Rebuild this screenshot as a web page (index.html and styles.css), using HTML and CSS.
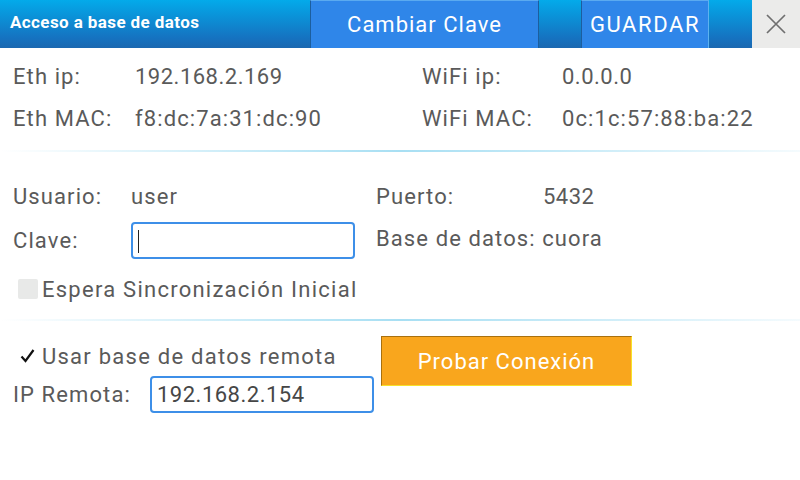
FILE: index.html
```html
<!DOCTYPE html>
<html lang="es">
<head>
<meta charset="utf-8">
<title>Acceso a base de datos</title>
<link rel="stylesheet" href="styles.css">
</head>
<body>
<div class="screen">
  <header class="topbar">
    <div class="title">Acceso a base de datos</div>
    <button class="tbtn btn-clave">Cambiar Clave</button>
    <div class="spacer1"></div>
    <button class="tbtn btn-guardar">GUARDAR</button>
    <div class="spacer2"></div>
    <button class="close" aria-label="Cerrar">
      <svg width="20" height="20" viewBox="0 0 20 20"><path d="M1 1 L19 19 M19 1 L1 19" stroke="#6f6f6f" stroke-width="1.7" fill="none"/></svg>
    </button>
  </header>

  <section class="info">
    <span class="lbl">Eth ip:</span><span class="val num">192.168.2.169</span>
    <span class="lbl">WiFi ip:</span><span class="val num">0.0.0.0</span>
    <span class="lbl">Eth MAC:</span><span class="val">f8:dc:7a:31:dc:90</span>
    <span class="lbl">WiFi MAC:</span><span class="val">0c:1c:57:88:ba:22</span>
  </section>

  <div class="divider d1"></div>

  <section class="db">
    <span class="lbl">Usuario:</span><span class="val">user</span>
    <span class="lbl">Puerto:</span><span class="val num">5432</span>
    <span class="lbl">Clave:</span>
    <div class="field"><div class="input pass"><span class="caret"></span></div></div>
    <span class="lbl span2">Base de datos: cuora</span>
  </section>

  <div class="check-row">
    <span class="box"></span><span class="lbl wide">Espera Sincronización Inicial</span>
  </div>

  <div class="divider d2"></div>

  <section class="remote">
    <div class="remote-left">
      <div class="check-row2">
        <svg class="tick" width="16" height="16" viewBox="0 0 16 16"><path d="M1.5 8.5 L5.5 13 L13.5 2" stroke="#111" stroke-width="2.2" fill="none"/></svg>
        <span class="lbl wide">Usar base de datos remota</span>
      </div>
      <div class="ip-row"><span class="lbl">IP Remota:</span><div class="input ip num">192.168.2.154</div></div>
    </div>
    <button class="probar">Probar Conexión</button>
  </section>
</div>
</body>
</html>
```

FILE: styles.css
```css
* { box-sizing: border-box; }
html, body { margin: 0; padding: 0; background: #ffffff; }
body { font-family: Roboto, "Noto Sans", "Liberation Sans", sans-serif; color: #5a5a5a; }
.screen { width: 800px; height: 480px; overflow: hidden; position: relative; background: #fff; }

.topbar {
  display: flex;
  height: 48px;
  background: linear-gradient(to bottom, #03aaea 0%, #1572c0 80%, #1b68b0 100%);
}
.title {
  width: 310px;
  padding-left: 10px;
  line-height: 44px;
  font-weight: bold;
  font-size: 17px;
  letter-spacing: 0.4px;
  color: #fff;
}
.tbtn {
  height: 48px;
  margin: 0;
  padding: 0;
  background: #2f86e9;
  color: #fff;
  font-family: Roboto, sans-serif;
  font-size: 22px;
  letter-spacing: 1px;
  border: none;
  border-top: 1px solid #5aaaf0;
  border-left: 1px solid #1c5e9e;
  border-right: 1px solid #1c5e9e;
  line-height: 46px;
}
.btn-clave { width: 229px; }
.spacer1 { width: 42px; }
.btn-guardar { width: 128px; border-right-color: #5cb2f0; letter-spacing: 1.6px; }
.spacer2 { width: 43px; }
.close {
  width: 48px;
  height: 48px;
  border: none;
  margin: 0;
  padding: 0;
  background: #ebebea;
  display: flex;
  align-items: center;
  justify-content: center;
}

.lbl, .val { font-size: 22px; letter-spacing: 1.1px; white-space: nowrap; }
.num { letter-spacing: 0.5px; }
.wide { letter-spacing: 1.25px; }

.info {
  display: grid;
  grid-template-columns: 122px 287px 140px auto;
  grid-auto-rows: 42px;
  align-items: center;
  padding: 7px 0 0 13px;
}

.divider {
  height: 2px;
  width: 800px;
  background: linear-gradient(to right, rgba(150,215,240,0) 0%, #a8dff3 50%, rgba(150,215,240,0.1) 100%);
}
.d1 { margin-top: 11px; }
.d2 { margin-top: 18px; }

.db {
  display: grid;
  grid-template-columns: 118px 245px 167px auto;
  grid-auto-rows: 44px;
  align-items: center;
  padding: 22px 0 0 13px;
}
.span2 { grid-column: 3 / span 2; margin-top: -4px; }
.field { display: flex; align-items: center; }
.input {
  height: 37px;
  border: 2px solid #3d8fe8;
  border-radius: 4px;
  background: #fff;
}
.pass { width: 224px; padding: 6px 0 0 5px; }
.caret { display: block; width: 1px; height: 23px; background: #222; }

.check-row {
  display: flex;
  align-items: center;
  padding: 15px 0 0 18px;
  height: 39px;
}
.box {
  width: 20px;
  height: 20px;
  background: #e8e9e8;
  border-radius: 2px;
  margin-right: 4px;
}

.remote {
  display: flex;
  padding-left: 13px;
}
.remote-left { width: 368px; }
.check-row2 {
  display: flex;
  align-items: center;
  height: 36px;
  margin-top: 17px;
  padding-left: 7px;
}
.tick { margin-right: 6px; }
.ip-row {
  display: flex;
  align-items: center;
  margin-top: 2px;
}
.ip-row .lbl { width: 137px; }
.ip {
  width: 224px;
  padding-left: 5px;
  font-size: 22px;
  line-height: 33px;
  color: #464646;
}
.probar {
  margin-top: 15px;
  width: 251px;
  height: 50px;
  background: #f9a61d;
  border: 1px solid #a8700f;
  border-right-color: #f7e12a;
  border-bottom-color: #f7e12a;
  color: #fff;
  font-family: Roboto, sans-serif;
  font-size: 22px;
  letter-spacing: 1px;
  padding: 0;
}
```
